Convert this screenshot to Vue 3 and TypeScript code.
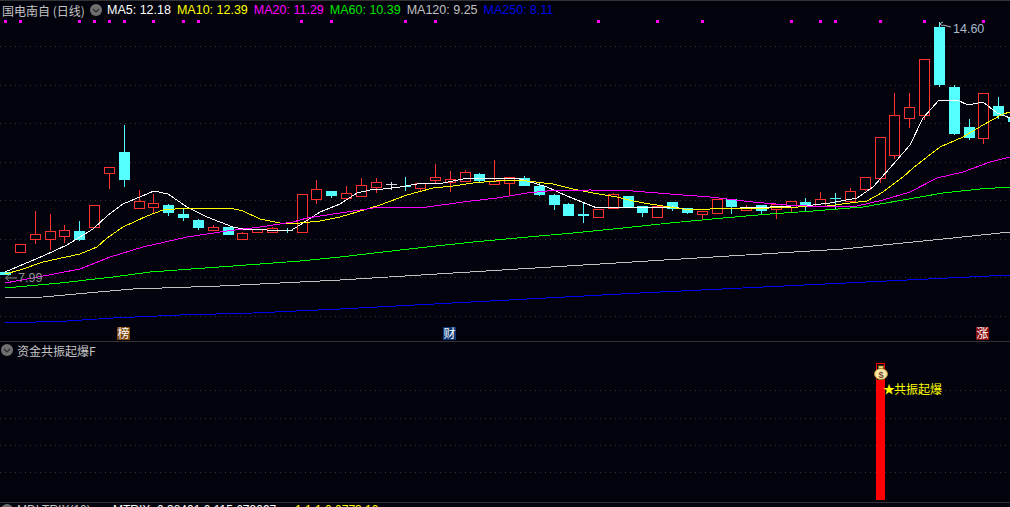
<script setup lang="ts">
type Candle = [number, number, number, number, 'r' | 'c' | 'w']

const candleRows: Candle[] = [
  [272, 275, 272, 275, 'c'], [244, 252, 244, 252, 'r'], [234, 239, 211, 244, 'r'], [231, 239, 214, 250, 'r'],
  [230, 236, 225, 243, 'r'], [231, 240, 221, 241, 'c'], [205, 227, 205, 227, 'r'], [167, 173, 167, 189, 'r'],
  [152, 180, 125, 187, 'c'], [201, 208, 190, 208, 'r'], [203, 207, 194, 213, 'r'], [205, 213, 204, 216, 'c'],
  [214, 218, 208, 221, 'c'], [220, 228, 219, 230, 'c'], [227, 230, 225, 230, 'r'], [227, 235, 227, 235, 'c'],
  [233, 239, 232, 239, 'r'], [229, 232, 229, 232, 'r'], [228, 232, 227, 232, 'r'], [230, 231, 228, 233, 'c'],
  [194, 232, 194, 232, 'r'], [189, 199, 180, 204, 'r'], [191, 196, 191, 198, 'c'], [193, 198, 186, 198, 'r'],
  [185, 196, 178, 197, 'r'], [182, 187, 178, 193, 'r'], [184, 185, 182, 190, 'w'], [186, 187, 177, 191, 'c'],
  [183, 188, 183, 192, 'r'], [177, 180, 164, 183, 'r'], [179, 182, 171, 192, 'r'], [172, 181, 170, 182, 'r'],
  [174, 181, 173, 182, 'c'], [181, 184, 160, 184, 'r'], [177, 183, 177, 196, 'r'], [178, 186, 176, 186, 'c'],
  [186, 195, 183, 196, 'c'], [195, 205, 194, 210, 'c'], [204, 216, 203, 216, 'c'], [214, 216, 203, 223, 'c'],
  [209, 217, 209, 218, 'r'], [194, 208, 193, 208, 'r'], [196, 208, 196, 208, 'c'], [206, 213, 206, 217, 'c'],
  [206, 217, 206, 218, 'r'], [202, 209, 202, 211, 'c'], [208, 213, 208, 214, 'c'], [211, 214, 211, 220, 'r'],
  [199, 213, 199, 213, 'r'], [199, 207, 199, 214, 'c'], [208, 210, 205, 211, 'r'], [205, 211, 205, 215, 'c'],
  [204, 209, 204, 219, 'r'], [201, 207, 201, 213, 'r'], [202, 206, 198, 212, 'c'], [199, 206, 192, 206, 'r'],
  [198, 199, 193, 209, 'c'], [191, 201, 188, 201, 'r'], [177, 189, 177, 191, 'r'], [137, 178, 137, 183, 'r'],
  [115, 155, 93, 159, 'r'], [107, 118, 93, 128, 'r'], [59, 115, 59, 120, 'r'], [27, 85, 22, 87, 'c'],
  [87, 134, 85, 135, 'c'], [127, 138, 119, 140, 'c'], [93, 138, 93, 144, 'r'], [106, 116, 97, 119, 'c'],
  [118, 122, 118, 122, 'c'],
]

const candles = candleRows.map((c, i) => {
  const cx = Math.round(5.2 + 14.82 * i)
  return { cx, top: c[0], bottom: c[1], wickTop: c[2], wickBottom: c[3], kind: c[4] }
})

const colors = { r: '#ff3232', c: '#54ffff', w: '#d8d8d8' }

const pts = (a: number[][]) => a.map((p) => p.join(',')).join(' ')

const maLines = [
  { color: '#ffffff', points: pts([[5,272],[43,256],[67,245],[93,229],[107,216],[123,204],[154,191],[168,194],[187,207],[207,217],[233,227],[243,229],[290,231],[300,225],[320,212],[340,204],[357,193],[370,190],[383,189],[400,187],[417,184],[443,183],[463,179],[483,178],[517,178],[527,181],[547,187],[567,196],[587,204],[597,208],[673,207],[690,210],[710,209],[770,207],[813,205],[830,203],[857,198],[873,187],[890,168],[910,145],[923,118],[939,100],[957,100],[968,105],[983,102],[997,113],[1010,118]]) },
  { color: '#ffff00', points: pts([[5,274],[20,270],[43,262],[80,254],[97,247],[107,238],[123,227],[147,216],[163,210],[187,208],[230,208],[243,211],[260,219],[280,223],[300,223],[320,221],[340,217],[357,212],[380,205],[407,195],[433,188],[453,186],[473,183],[507,180],[527,181],[553,184],[573,189],[593,193],[617,197],[633,201],[650,204],[670,207],[683,209],[710,209],[770,208],[827,206],[850,203],[867,201],[883,192],[903,177],[913,168],[927,157],[940,147],[963,137],[983,125],[1003,114],[1010,112]]) },
  { color: '#ff00ff', points: pts([[5,283],[33,278],[80,269],[110,257],[143,247],[187,237],[227,231],[260,227],[293,222],[307,218],[340,213],[360,210],[380,207],[427,207],[463,202],[497,198],[527,193],[547,191],[590,190],[633,191],[670,194],[710,197],[753,202],[787,205],[827,207],[857,206],[883,200],[910,192],[937,178],[963,172],[990,162],[1010,157]]) },
  { color: '#00ff00', points: pts([[5,288],[60,283],[113,277],[150,272],[233,266],[300,261],[340,257],[409,249],[473,242],[517,238],[573,233],[623,228],[670,223],[723,218],[770,214],[813,211],[863,207],[903,200],[943,193],[980,189],[1010,187]]) },
  { color: '#c0c0c0', points: pts([[5,298],[43,297],[87,293],[133,289],[220,286],[340,280],[843,249],[903,243],[953,238],[1010,232]]) },
  { color: '#0000f0', points: pts([[5,323],[67,321],[113,318],[180,315],[253,313],[340,309],[640,293],[1010,275]]) },
]

const mainGrid = [46, 85, 123, 162, 200, 239, 277, 316]
const subGrid = [390, 418, 445, 472]
const signalDots = [4, 19, 78, 93, 108, 123, 152, 182, 197, 300, 330, 404, 434, 597, 656, 701, 790, 819, 834, 879, 923, 982]

const series = [
  { text: 'MA5: 12.18', cls: 's-white' },
  { text: 'MA10: 12.39', cls: 's-yellow' },
  { text: 'MA20: 11.29', cls: 's-magenta' },
  { text: 'MA60: 10.39', cls: 's-green' },
  { text: 'MA120: 9.25', cls: 's-gray' },
  { text: 'MA250: 8.11', cls: 's-blue' },
]

const markers = [
  { text: '榜', x: 117, cls: 'm-brown' },
  { text: '财', x: 443, cls: 'm-blue' },
  { text: '涨', x: 976, cls: 'm-red' },
]
</script>

<template>
  <div class="screen">
    <section class="panel panel-main">
      <svg class="canvas" width="1010" height="340" viewBox="0 1 1010 340">
        <line v-for="y in mainGrid" :key="y" class="grid" x1="0" x2="1010" :y1="y + 0.5" :y2="y + 0.5" />
        <rect v-for="x in signalDots" :key="x" class="dot" :x="x" y="20" width="3" height="3" />
        <g v-for="c in candles" :key="c.cx">
          <line class="crisp" :stroke="colors[c.kind]" :x1="c.cx + 0.5" :x2="c.cx + 0.5" :y1="c.wickTop" :y2="c.wickBottom" />
          <rect
            v-if="c.kind === 'r'"
            class="crisp hollow"
            :stroke="colors.r"
            :x="c.cx - 4.5"
            :y="c.top + 0.5"
            width="10"
            :height="c.bottom - c.top"
          />
          <rect
            v-else
            class="crisp"
            :fill="colors[c.kind]"
            :x="c.cx - 5"
            :y="c.top"
            width="11"
            :height="c.bottom - c.top"
          />
        </g>
        <polyline v-for="m in maLines" :key="m.color" class="ma" :stroke="m.color" :points="m.points" />
        <path class="pointer" d="M943 22 L939.5 24 L943 26 M943 25 L951 27" />
        <text class="price" x="953" y="33">14.60</text>
        <path class="pointer dim" d="M9 275 L5.5 278 L9 281 M6 278 L17 278" />
        <text class="price dim-text" x="18" y="282">7.99</text>
        <g v-for="m in markers" :key="m.text">
          <rect :class="m.cls" :x="m.x" y="327" width="13" height="13" />
          <text class="marker" :x="m.x + 6.5" y="338">{{ m.text }}</text>
        </g>
      </svg>
      <header class="legend legend-main">
        <span class="title">国电南自 (日线)</span>
        <svg class="toggle" width="12" height="12" viewBox="0 0 12 12">
          <circle cx="6" cy="6" r="6" fill="#6f6f6f" />
          <path d="M3 5 L6 8 L9 5" fill="none" stroke="#2a2a2a" stroke-width="1.2" />
        </svg>
        <span class="series">
          <span v-for="s in series" :key="s.text" :class="s.cls">{{ s.text }}</span>
        </span>
      </header>
    </section>

    <section class="panel panel-sub">
      <svg class="canvas" width="1010" height="160" viewBox="0 342 1010 160">
        <line v-for="y in subGrid" :key="y" class="grid" x1="0" x2="1010" :y1="y + 0.5" :y2="y + 0.5" />
        <rect class="crisp" fill="#ff0000" x="876" y="380" width="9" height="120" />
        <rect class="crisp outline" x="876.5" y="363.5" width="8" height="17" />
        <path d="M878 366 L884 366 L882.5 369 L879.5 369 Z" fill="#f4dc90" stroke="#9a7a20" stroke-width="0.8" />
        <ellipse cx="881" cy="374" rx="6.5" ry="5.5" fill="#f8e8a8" stroke="#b08a20" />
        <text class="bag" x="881" y="377.5">$</text>
        <text class="signal" x="883" y="394">★<tspan dx="-1">共振起爆</tspan></text>
      </svg>
      <header class="legend legend-sub">
        <svg class="toggle" width="12" height="12" viewBox="0 0 12 12">
          <circle cx="6" cy="6" r="6" fill="#6f6f6f" />
          <path d="M3 5 L6 8 L9 5" fill="none" stroke="#2a2a2a" stroke-width="1.2" />
        </svg>
        <span class="title">资金共振起爆F</span>
      </header>
    </section>

    <section class="panel-strip">
      <header class="legend legend-sub legend-strip">
        <svg class="toggle" width="12" height="12" viewBox="0 0 12 12">
          <circle cx="6" cy="6" r="6" fill="#6f6f6f" />
        </svg>
        <span class="title strip-title">MDI TRIX(12)</span>
        <span class="strip-white">MTRIX: 0.38401 0.115 673097</span>
        <span class="strip-yellow">1.1.1.0 0773.10</span>
      </header>
    </section>
  </div>
</template>

<style>
html,
body {
  margin: 0;
  background: #03030e;
}
</style>

<style scoped>
.screen {
  width: 1010px;
  height: 507px;
  overflow: hidden;
  background: #03030e;
  display: flex;
  flex-direction: column;
  font-family: "Liberation Sans", "Noto Sans CJK SC", sans-serif;
}
.panel {
  position: relative;
  box-sizing: border-box;
  flex: none;
  border-bottom: 1px solid #333336;
}
.panel-main {
  height: 342px;
  border-top: 1px solid #333336;
}
.panel-sub {
  height: 161px;
}
.panel-strip {
  flex: 1;
  overflow: hidden;
}
.canvas {
  position: absolute;
  top: 0;
  left: 0;
  display: block;
}
.legend {
  position: relative;
  display: flex;
  align-items: center;
  font-size: 12px;
  white-space: nowrap;
}
.legend-main {
  height: 18px;
  padding-left: 2px;
}
.legend-sub {
  height: 16px;
  padding-left: 1px;
}
.legend-strip {
  margin-top: -1px;
}
.toggle {
  flex: none;
}
.legend-main .toggle {
  margin-left: 7px;
}
.legend-sub .title {
  margin-left: 4px;
}
.title {
  color: #c4c4c4;
  font-family: "Noto Sans CJK SC", sans-serif;
  width: 81px;
}
.legend-sub .title {
  width: auto;
}
.series {
  display: flex;
  gap: 6px;
  margin-left: 5px;
  font-size: 12.5px;
}
.s-white {
  color: #ffffff;
}
.s-yellow {
  color: #ffff00;
}
.s-magenta {
  color: #ff00ff;
}
.s-green {
  color: #00e600;
}
.s-gray {
  color: #c0c0c0;
}
.s-blue {
  color: #0000e6;
}
.legend-sub .strip-title {
  font-family: "Liberation Sans", sans-serif;
  width: 80px;
}
.strip-white {
  color: #ffffff;
  margin-left: 16px;
  width: 182px;
}
.strip-yellow {
  color: #ffff00;
}
.grid {
  stroke: #34342e;
  stroke-width: 1;
  stroke-dasharray: 1 4;
  shape-rendering: crispEdges;
}
.dot {
  fill: #ff00ff;
  shape-rendering: crispEdges;
}
.crisp {
  shape-rendering: crispEdges;
}
.hollow {
  fill: #03030e;
  stroke-width: 1;
}
.outline {
  fill: none;
  stroke: #ff0000;
}
.ma {
  fill: none;
  stroke-width: 1;
  shape-rendering: crispEdges;
}
.pointer {
  fill: none;
  stroke: #b8b8b8;
  stroke-width: 1;
}
.pointer.dim {
  stroke: #8a8a8a;
}
.price {
  fill: #a9bacb;
  font-size: 12.5px;
  font-family: "Liberation Sans", sans-serif;
}
.dim-text {
  fill: #8f8f8f;
}
.marker {
  fill: #ffffff;
  font-size: 12px;
  text-anchor: middle;
  font-family: "Noto Sans CJK SC", sans-serif;
}
.m-brown {
  fill: #7c4610;
}
.m-blue {
  fill: #0c3a78;
}
.m-red {
  fill: #8a0c0c;
}
.bag {
  fill: #7a4a3a;
  font-size: 9px;
  font-weight: 700;
  text-anchor: middle;
  font-family: "Liberation Sans", sans-serif;
}
.signal {
  fill: #ffff00;
  font-size: 12px;
  font-family: "Noto Sans CJK SC", sans-serif;
}
</style>
